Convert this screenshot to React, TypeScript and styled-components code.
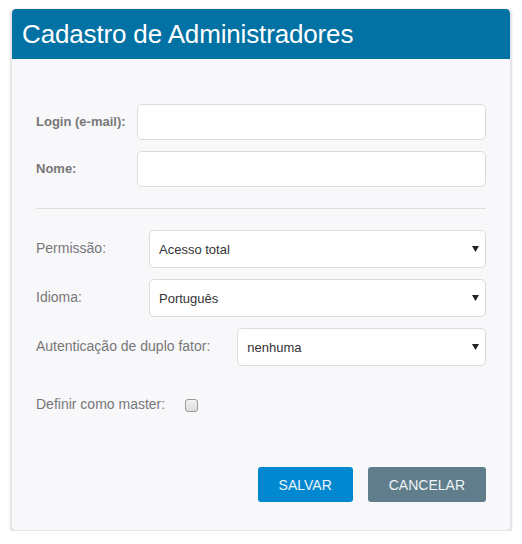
import React, { useState } from 'react';
import styled, { createGlobalStyle } from 'styled-components';

const GlobalStyle = createGlobalStyle`
  html, body {
    margin: 0;
    padding: 0;
    background: #ffffff;
  }
  body {
    font-family: "Liberation Sans", Arial, Helvetica, sans-serif;
  }
`;

const Page = styled.div`
  padding: 9px 11px 0 11px;
`;

const Card = styled.div`
  width: 500px;
  border-radius: 4px;
  background: #f8f8fb;
  border: 1px solid #e4e4ea;
  border-top: none;
  box-shadow: 0 1px 3px rgba(0, 0, 0, 0.28);
  overflow: hidden;
  box-sizing: border-box;
`;

const Header = styled.div`
  height: 50px;
  background: #0271a3;
  display: flex;
  align-items: center;
  padding: 0 10px;
  border-radius: 4px 4px 0 0;
`;

const Title = styled.h1`
  margin: 0;
  font-weight: normal;
  font-size: 26px;
  color: #ffffff;
  letter-spacing: -0.15px;
`;

const Body = styled.div`
  padding: 45px 24px 28px 24px;
  display: flex;
  flex-direction: column;
`;

const Group = styled.div`
  display: flex;
  flex-direction: column;
  gap: 11px;
`;

const Row = styled.div`
  display: flex;
  align-items: center;
`;

const Label = styled.label<{ $width?: number; $bold?: boolean; $gap?: number }>`
  flex: 0 0 ${p => (p.$width ? `${p.$width}px` : 'auto')};
  padding-right: ${p => (p.$width ? 0 : p.$gap ?? 27)}px;
  padding-bottom: 2px;
  font-size: ${p => (p.$bold ? 13 : 14)}px;
  font-weight: ${p => (p.$bold ? 700 : 400)};
  color: #777777;
  white-space: nowrap;
`;

const TextInput = styled.input`
  flex: 1;
  height: 36px;
  box-sizing: border-box;
  border: 1px solid #dcdcdc;
  border-radius: 5px;
  background: #ffffff;
  padding: 0 10px;
  font-family: inherit;
  font-size: 13px;
  outline: none;
`;

const Divider = styled.hr`
  border: none;
  border-top: 1px solid #dedede;
  margin: 21px 0 21px 0;
`;

const SelectWrap = styled.div`
  flex: 1;
  position: relative;
`;

const Select = styled.select`
  width: 100%;
  height: 38px;
  box-sizing: border-box;
  appearance: none;
  -webkit-appearance: none;
  border: 1px solid #dcdcdc;
  border-radius: 5px;
  background: #ffffff;
  padding: 0 9px;
  font-family: inherit;
  font-size: 13px;
  color: #333333;
  outline: none;
`;

const Arrow = styled.svg`
  position: absolute;
  right: 7px;
  top: 16px;
  pointer-events: none;
`;

const CheckRow = styled(Row)`
  margin-top: 30px;
`;

const Checkbox = styled.input`
  appearance: none;
  -webkit-appearance: none;
  width: 13px;
  height: 13px;
  margin: 0;
  border: 1px solid #9a9a9a;
  border-radius: 3px;
  background: linear-gradient(#f2f2f2, #dcdcdc);
  box-sizing: border-box;
  &:checked {
    background: #0288d1;
    border-color: #0277bd;
  }
`;

const Actions = styled.div`
  display: flex;
  justify-content: flex-end;
  gap: 15px;
  margin-top: 53px;
`;

const Button = styled.button<{ $variant: 'primary' | 'secondary' }>`
  height: 35px;
  padding: 0 21px;
  border: none;
  border-radius: 3px;
  background: ${p => (p.$variant === 'primary' ? '#0288d1' : '#607d8b')};
  color: #eef4f7;
  font-family: inherit;
  font-size: 14px;
  text-transform: uppercase;
  cursor: pointer;
`;

const SelectField: React.FC<{ value: string; options: string[]; onChange: (v: string) => void }> = ({ value, options, onChange }) => (
  <SelectWrap>
    <Select value={value} onChange={e => onChange(e.target.value)}>
      {options.map(o => (
        <option key={o} value={o}>{o}</option>
      ))}
    </Select>
    <Arrow width="7" height="6" viewBox="0 0 7 6">
      <path d="M0 0 L7 0 L3.5 6 Z" fill="#222" />
    </Arrow>
  </SelectWrap>
);

const App: React.FC = () => {
  const [perm, setPerm] = useState('Acesso total');
  const [lang, setLang] = useState('Português');
  const [tfa, setTfa] = useState('nenhuma');
  const [master, setMaster] = useState(false);

  return (
    <Page>
      <GlobalStyle />
      <Card>
        <Header>
          <Title>Cadastro de Administradores</Title>
        </Header>
        <Body>
          <Group>
            <Row>
              <Label $width={101} $bold>Login (e-mail):</Label>
              <TextInput type="text" />
            </Row>
            <Row>
              <Label $width={101} $bold>Nome:</Label>
              <TextInput type="text" />
            </Row>
          </Group>
          <Divider />
          <Group>
            <Row>
              <Label $width={113}>Permissão:</Label>
              <SelectField value={perm} onChange={setPerm} options={['Acesso total', 'Somente leitura']} />
            </Row>
            <Row>
              <Label $width={113}>Idioma:</Label>
              <SelectField value={lang} onChange={setLang} options={['Português', 'English', 'Español']} />
            </Row>
            <Row>
              <Label>Autenticação de duplo fator:</Label>
              <SelectField value={tfa} onChange={setTfa} options={['nenhuma', 'e-mail', 'aplicativo']} />
            </Row>
          </Group>
          <CheckRow>
            <Label $gap={20}>Definir como master:</Label>
            <Checkbox type="checkbox" checked={master} onChange={e => setMaster(e.target.checked)} />
          </CheckRow>
          <Actions>
            <Button $variant="primary">Salvar</Button>
            <Button $variant="secondary">Cancelar</Button>
          </Actions>
        </Body>
      </Card>
    </Page>
  );
};

export default App;
